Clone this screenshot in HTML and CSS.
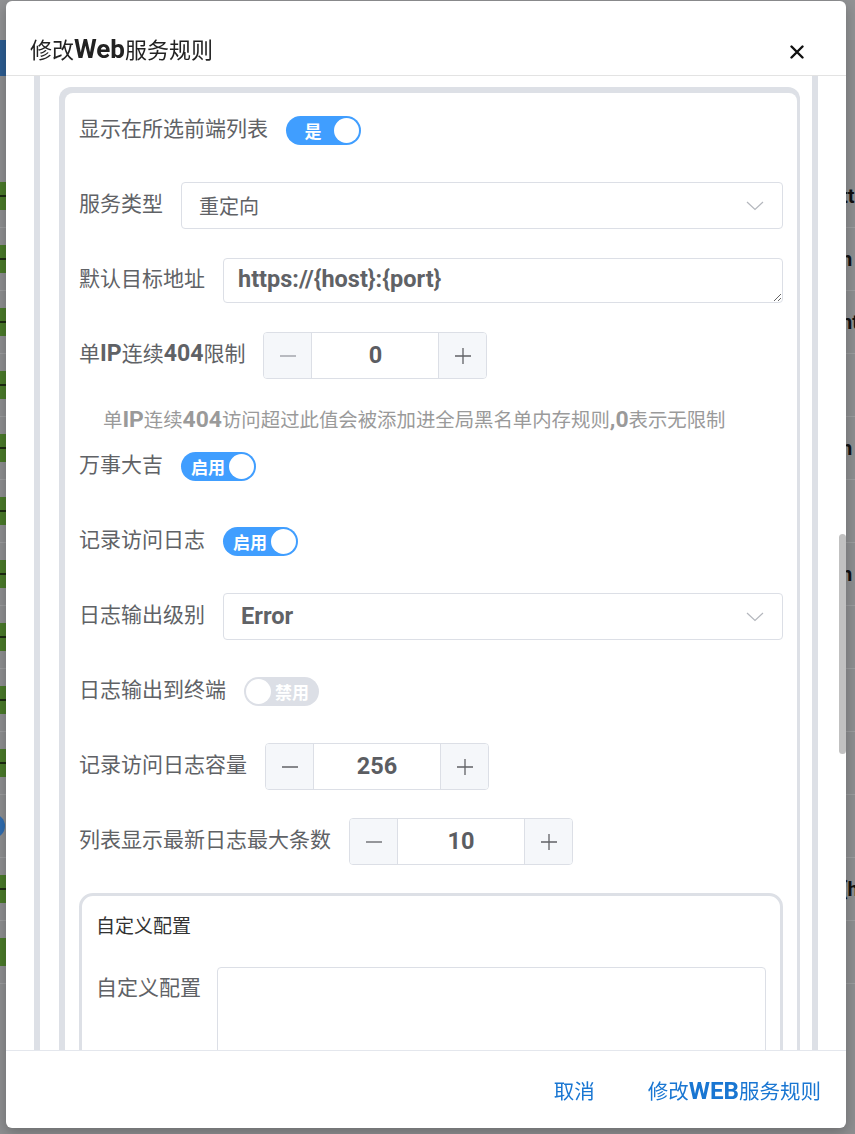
FILE: index.html
```html
<!DOCTYPE html>
<html lang="zh-CN">
<head>
    <meta charset="UTF-8">
    <meta name="viewport" content="width=device-width, initial-scale=1.0">
    <title>修改Web服务规则</title>
    <link rel="stylesheet" href="styles.css">
</head>
<body>
    <!-- page behind the dialog -->
    <div class="page">
        <div class="page-head"></div>
        <div class="page-nav"></div>
        <div class="page-rows">
            <div class="page-row"><span class="tag"></span><span class="cell">tt</span></div>
            <div class="page-row"><span class="tag"></span><span class="cell">h</span></div>
            <div class="page-row"><span class="tag"></span><span class="cell">nt</span></div>
            <div class="page-row"><span class="tag"></span><span class="cell"></span></div>
            <div class="page-row"><span class="tag"></span><span class="cell">h</span></div>
            <div class="page-row"><span class="tag"></span><span class="cell"></span></div>
            <div class="page-row"><span class="tag"></span><span class="cell">h</span></div>
            <div class="page-row"><span class="tag"></span><span class="cell"></span></div>
            <div class="page-row"><span class="tag"></span><span class="cell"></span></div>
            <div class="page-row"><span class="tag"></span><span class="cell"></span></div>
            <div class="page-row"><span class="dot"></span><span class="cell"></span></div>
            <div class="page-row"><span class="tag"></span><span class="cell">{h</span></div>
            <div class="page-row"><span class="tag blank"></span><span class="cell"></span></div>
        </div>
    </div>

    <div class="dialog">
        <div class="dialog-header">
            <div class="dialog-title">修改<b>Web</b>服务规则</div>
            <svg class="close" width="14" height="14" viewBox="0 0 14 14">
                <path d="M1.5 1.5 L12.5 12.5 M12.5 1.5 L1.5 12.5" stroke="#111" stroke-width="2.4" stroke-linecap="round"/>
            </svg>
        </div>

        <div class="dialog-body">
            <div class="body-scroll">
                <div class="outer">
                    <div class="card">
                        <div class="panel">
                            <div class="form-row">
                                <label class="label">显示在所选前端列表</label>
                                <div class="switch on"><span class="switch-text">是</span><span class="knob"></span></div>
                            </div>

                            <div class="form-row">
                                <label class="label">服务类型</label>
                                <div class="select">
                                    <span>重定向</span>
                                    <svg class="arrow" width="18" height="10" viewBox="0 0 18 10"><path d="M1 1 L9 8.5 L17 1" fill="none" stroke="#b4b7bd" stroke-width="1.2"/></svg>
                                </div>
                            </div>

                            <div class="form-row">
                                <label class="label">默认目标地址</label>
                                <textarea class="textarea" readonly>https://{host}:{port}</textarea>
                            </div>

                            <div class="form-row">
                                <label class="label">单<b>IP</b>连续<b>404</b>限制</label>
                                <div class="number">
                                    <span class="num-btn"><svg width="18" height="18" viewBox="0 0 18 18"><path d="M1 9 H17" stroke="#a3a6ad" stroke-width="1.3"/></svg></span>
                                    <span class="num-value">0</span>
                                    <span class="num-btn"><svg width="18" height="18" viewBox="0 0 18 18"><path d="M1 9 H17 M9 1 V17" stroke="#606266" stroke-width="1.3"/></svg></span>
                                </div>
                            </div>
                            <div class="help">单<b>IP</b>连续<b>404</b>访问超过此值会被添加进全局黑名单内存规则<b>,0</b>表示无限制</div>

                            <div class="form-row">
                                <label class="label">万事大吉</label>
                                <div class="switch on"><span class="switch-text">启用</span><span class="knob"></span></div>
                            </div>

                            <div class="form-row">
                                <label class="label">记录访问日志</label>
                                <div class="switch on"><span class="switch-text">启用</span><span class="knob"></span></div>
                            </div>

                            <div class="form-row">
                                <label class="label">日志输出级别</label>
                                <div class="select">
                                    <b>Error</b>
                                    <svg class="arrow" width="18" height="10" viewBox="0 0 18 10"><path d="M1 1 L9 8.5 L17 1" fill="none" stroke="#b4b7bd" stroke-width="1.2"/></svg>
                                </div>
                            </div>

                            <div class="form-row">
                                <label class="label">日志输出到终端</label>
                                <div class="switch off"><span class="knob"></span><span class="switch-text">禁用</span></div>
                            </div>

                            <div class="form-row">
                                <label class="label">记录访问日志容量</label>
                                <div class="number">
                                    <span class="num-btn"><svg width="18" height="18" viewBox="0 0 18 18"><path d="M1 9 H17" stroke="#606266" stroke-width="1.3"/></svg></span>
                                    <span class="num-value">256</span>
                                    <span class="num-btn"><svg width="18" height="18" viewBox="0 0 18 18"><path d="M1 9 H17 M9 1 V17" stroke="#606266" stroke-width="1.3"/></svg></span>
                                </div>
                            </div>

                            <div class="form-row">
                                <label class="label">列表显示最新日志最大条数</label>
                                <div class="number">
                                    <span class="num-btn"><svg width="18" height="18" viewBox="0 0 18 18"><path d="M1 9 H17" stroke="#606266" stroke-width="1.3"/></svg></span>
                                    <span class="num-value">10</span>
                                    <span class="num-btn"><svg width="18" height="18" viewBox="0 0 18 18"><path d="M1 9 H17 M9 1 V17" stroke="#606266" stroke-width="1.3"/></svg></span>
                                </div>
                            </div>

                            <div class="sub-card">
                                <div class="sub-title">自定义配置</div>
                                <div class="sub-row">
                                    <label class="label">自定义配置</label>
                                    <textarea class="config" readonly></textarea>
                                </div>
                            </div>
                        </div>
                    </div>
                </div>
            </div>
            <div class="scroll-track"><div class="scroll-thumb"></div></div>
        </div>

        <div class="dialog-footer">
            <span class="text-btn">取消</span>
            <span class="text-btn">修改<b>WEB</b>服务规则</span>
        </div>
    </div>
</body>
</html>
```

FILE: styles.css
```css
html, body {
    margin: 0;
    height: 1134px;
    overflow: hidden;
}
body {
    font-family: Roboto, "Noto Sans CJK SC", sans-serif;
    background-color: #8e8f91;
}
b {
    font-weight: 700;
    font-size: 1.18em;
    line-height: 1;
}

/* background page */
.page {
    display: flex;
    flex-direction: column;
}
.page-head {
    height: 40px;
    background-color: #929395;
}
.page-nav {
    height: 36px;
    width: 120px;
    background-color: #2d5d92;
}
.page-rows {
    padding-top: 89px;
}
.page-row {
    height: 62px;
    display: flex;
    align-items: center;
    justify-content: space-between;
    border-bottom: 1px solid #9c9d9f;
}
.tag {
    width: 26px;
    height: 28px;
    margin-left: -20px;
    background: linear-gradient(#4a7b2a 45%, #1c2a12 45%, #1c2a12 55%, #4a7b2a 55%);
}
.tag.blank {
    background: #4a7b2a;
}
.dot {
    width: 24px;
    height: 24px;
    margin-left: -19px;
    border-radius: 50%;
    background-color: #2f6db0;
}
.cell {
    margin-right: -6px;
    color: #111;
    font-size: 20px;
    font-weight: 700;
    width: 20px;
    overflow: hidden;
    white-space: nowrap;
}

/* dialog */
.dialog {
    position: fixed;
    left: 6px;
    top: 1px;
    width: 840px;
    height: 1127px;
    background-color: #fff;
    border-radius: 6px;
    box-shadow: 0 4px 14px rgba(0,0,0,0.25);
    display: flex;
    flex-direction: column;
    overflow: hidden;
}
.dialog-header {
    height: 75px;
    box-sizing: border-box;
    border-bottom: 1px solid #e3e3e3;
    display: flex;
    align-items: flex-end;
    justify-content: space-between;
    padding: 0 42px 9px 24px;
}
.dialog-title {
    font-size: 22px;
    line-height: 30px;
    color: #222;
}
.close {
    margin-bottom: 7px;
}
.dialog-body {
    flex: 1;
    min-height: 0;
    display: flex;
}
.body-scroll {
    flex: 1;
    overflow: hidden;
}
.scroll-track {
    width: 7px;
}
.scroll-thumb {
    margin-top: 458px;
    height: 220px;
    border-radius: 4px;
    background-color: #c1c1c1;
}
.outer {
    margin-left: 28px;
    width: 784px;
    height: 100%;
    border-left: 6px solid #dde0e6;
    border-right: 6px solid #dde0e6;
    padding: 11px 12px 0 19px;
    box-sizing: border-box;
}
.card {
    background-color: #dde0e6;
    border-radius: 12px 12px 0 0;
    padding: 6px 3px 0 6px;
}
.panel {
    background-color: #fff;
    border-radius: 8px 8px 0 0;
    padding: 14px 14px 0 14px;
}

/* form rows */
.form-row {
    display: flex;
    align-items: center;
    height: 47px;
    margin-bottom: 28px;
}
.label {
    font-size: 21px;
    line-height: 28px;
    margin-top: -3px;
    color: #606266;
    margin-right: 18px;
    white-space: nowrap;
}
.label b {
    font-size: 1.1em;
}
.help {
    font-size: 19.4px;
    line-height: 34px;
    color: #9a9a9a;
    padding: 0 0 0 24px;
    margin: -3px 0 5px 0;
}

/* switch */
.switch {
    width: 75px;
    height: 29px;
    border-radius: 15px;
    box-sizing: border-box;
    display: flex;
    align-items: center;
    padding: 0 2px;
}
.switch.on {
    background-color: #409eff;
}
.switch.off {
    background-color: #dcdfe6;
}
.switch-text {
    flex: 1;
    text-align: center;
    color: #fff;
    font-size: 17px;
    font-weight: 700;
    padding-left: 4px;
}
.switch.off .switch-text {
    padding-left: 0;
    padding-right: 4px;
}
.knob {
    width: 25px;
    height: 25px;
    border-radius: 50%;
    background-color: #fff;
}

/* inputs */
.select {
    flex: 1;
    height: 47px;
    box-sizing: border-box;
    border: 1px solid #dcdfe6;
    border-radius: 4px;
    display: flex;
    align-items: center;
    justify-content: space-between;
    padding: 0 18px 0 17px;
    font-size: 20px;
    color: #606266;
}
.textarea {
    flex: 1;
    height: 45px;
    box-sizing: border-box;
    border: 1px solid #dcdfe6;
    border-radius: 4px;
    padding: 6px 14px;
    font-family: Roboto, sans-serif;
    font-size: 23.5px;
    font-weight: 700;
    color: #606266;
    resize: vertical;
    outline: none;
}
.number {
    width: 224px;
    height: 47px;
    box-sizing: border-box;
    border: 1px solid #dcdfe6;
    border-radius: 4px;
    display: flex;
    overflow: hidden;
}
.num-btn {
    width: 47px;
    background-color: #f5f7fa;
    display: flex;
    align-items: center;
    justify-content: center;
}
.num-btn:first-child {
    border-right: 1px solid #dcdfe6;
}
.num-btn:last-child {
    border-left: 1px solid #dcdfe6;
}
.num-value {
    flex: 1;
    text-align: center;
    line-height: 45px;
    font-size: 23.5px;
    font-weight: 700;
    color: #5b5d62;
}

/* custom config */
.sub-card {
    border: 3px solid #dde0e6;
    border-radius: 14px;
    padding: 16px 14px 0 14px;
    height: 300px;
}
.sub-title {
    font-size: 19px;
    line-height: 30px;
    color: #333;
    margin-bottom: 25px;
}
.sub-row {
    display: flex;
    align-items: flex-start;
}
.sub-row .label {
    line-height: 47px;
    margin-top: -2px;
    margin-right: 16px;
}
.config {
    flex: 1;
    height: 160px;
    box-sizing: border-box;
    border: 1px solid #dcdfe6;
    border-radius: 4px;
    resize: none;
    outline: none;
}

/* footer */
.dialog-footer {
    height: 78px;
    box-sizing: border-box;
    border-top: 1px solid #e4e7ed;
    display: flex;
    align-items: center;
    justify-content: flex-end;
    padding-right: 25px;
    gap: 53px;
}
.text-btn {
    font-size: 20.5px;
    color: #1976d2;
}
```
